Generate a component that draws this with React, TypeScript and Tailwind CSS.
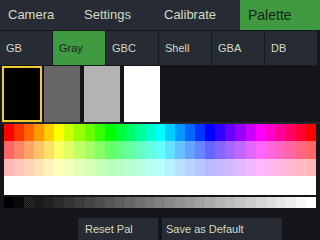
import React from 'react';

const topTabs = [
  { label: 'Camera', pad: 'pl-[8px]' },
  { label: 'Settings', pad: 'pl-[4px]' },
  { label: 'Calibrate', pad: 'pl-[4px]' },
  { label: 'Palette', pad: 'pl-[8px]' },
];

const paletteTabs = ['GB', 'Gray', 'GBC', 'Shell', 'GBA', 'DB'];

const swatches = ['#000000', '#666666', '#b3b3b3', '#ffffff'];

const hsl = (h: number, l: number) => `hsl(${h} 100% ${l}%)`;
const cols = Array.from({ length: 31 }, (_, i) => i * 12);
const grays = Array.from({ length: 31 }, (_, i) => Math.round((i / 30) * 255));

export default function App() {
  return (
    <div className="w-[320px] h-[240px] overflow-hidden bg-[#141419] flex flex-col font-['Liberation_Sans',Arial,sans-serif]">
      {/* main tabs */}
      <div className="flex h-[30px] bg-[#262b34] border-b border-[#15171c] box-content">
        {topTabs.map((t) => {
          const active = t.label === 'Palette';
          return (
            <div
              key={t.label}
              className={`w-[80px] flex items-center ${t.pad} ${
                active ? 'bg-[#3f9a42] text-[#18261a] text-[14px]' : 'text-[#d4dcc4] text-[13px]'
              }`}
            >
              {t.label}
            </div>
          );
        })}
      </div>

      {/* palette tabs */}
      <div className="flex h-[34px] bg-[#15171c] gap-[1px] border-b border-[#15171c] box-content">
        {paletteTabs.map((t) => {
          const active = t === 'Gray';
          return (
            <div
              key={t}
              className={`w-[52px] flex items-center pl-[6px] text-[11px] ${
                active ? 'bg-[#3f9a42] text-[#18261a]' : 'bg-[#262b34] text-[#d4dcc4]'
              }`}
            >
              {t}
            </div>
          );
        })}
      </div>

      {/* current palette */}
      <div className="flex h-[56px] pl-[2px]">
        <div className="w-[40px] h-[56px] border-2 border-[#f2cb33] bg-black" />
        {swatches.slice(1).map((c, i) => (
          <div
            key={c}
            className={`w-[36px] h-[56px] ${i === 0 ? 'ml-[2px]' : 'ml-[4px]'}`}
            style={{ background: c }}
          />
        ))}
      </div>

      <div className="h-[2px] bg-[#22252c]" />

      {/* colour picker */}
      <div className="ml-[4px] w-[312px] flex flex-col">
        <div className="grid grid-cols-[repeat(31,1fr)] h-[17px]">
          {cols.map((h) => (
            <div key={h} style={{ background: hsl(h, 50) }} />
          ))}
        </div>
        <div className="grid grid-cols-[repeat(31,1fr)] h-[18px]">
          {cols.map((h) => (
            <div key={h} style={{ background: hsl(h, 70) }} />
          ))}
        </div>
        <div className="grid grid-cols-[repeat(31,1fr)] h-[17px]">
          {cols.map((h) => (
            <div key={h} style={{ background: hsl(h, 86) }} />
          ))}
        </div>
        <div className="h-[19px] bg-white" />
        <div className="grid grid-cols-[repeat(31,1fr)] h-[11px] mt-[2px]">
          {grays.map((g, i) =>
            i === 2 ? (
              <div
                key={i}
                className="bg-[repeating-conic-gradient(#3a3a3a_0%_25%,#0a0a0a_0%_50%)] bg-[length:2px_2px]"
              />
            ) : (
              <div key={i} style={{ background: `rgb(${g},${g},${g})` }} />
            )
          )}
        </div>
      </div>

      {/* actions */}
      <div className="flex mt-[10px] pl-[78px] gap-[4px]">
        <button className="w-[80px] h-[22px] bg-[#262b34] text-[#d4dcc4] text-[11px] text-left pl-[7px]">
          Reset Pal
        </button>
        <button className="w-[120px] h-[22px] bg-[#262b34] text-[#d4dcc4] text-[11px] text-left pl-[4px]">
          Save as Default
        </button>
      </div>
    </div>
  );
}
